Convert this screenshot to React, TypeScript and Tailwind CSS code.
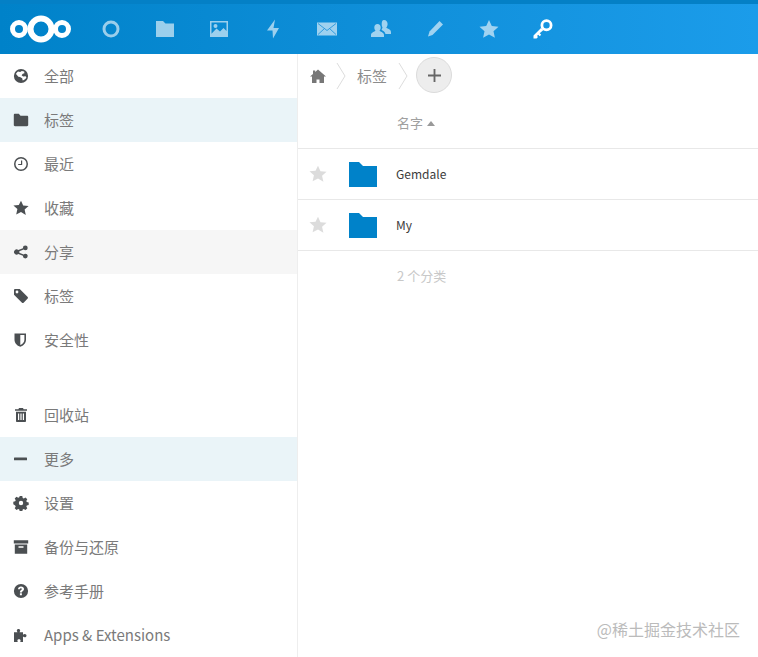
import React from "react";

const FONT = "font-['Noto_Sans_CJK_SC','Liberation_Sans',sans-serif]";

// sidebar glyphs, 16x16 viewBox
const icons: Record<string, React.ReactNode> = {
	globe: (
		<path
			fillRule="evenodd"
			d="M8 .9a7.100 7.100 0 1 0 0 14.200A7.100 7.100 0 0 0 8 .9zM5 3.400l2.200.5 1.600-.9 2.400.6.2 1.600-1.600.6-1.200 1.400 1.500 1.200 2.500-.2.8 1c-.6 1.600-2 2.900-3.700 3.300l-.5-2.200-2.200-1.400-1.600-.2-2.400-2.600C2.900 5.600 3.800 4.300 5 3.400z"
		/>
	),
	folder: <path d="M.8 3C.8 2.300 1.300 1.800 2 1.800h3.800l1.700 2h6.500c.7 0 1.200.5 1.200 1.200v8c0 .7-.5 1.200-1.200 1.200H2c-.7 0-1.200-.5-1.200-1.200z" />,
	clock: (
		<path
			fillRule="evenodd"
			d="M8 1a7 7 0 1 0 0 14A7 7 0 0 0 8 1zm0 1.500a5.500 5.500 0 1 1 0 11 5.500 5.500 0 0 1 0-11zM8 4.500h1.200v4.600H5.200V7.900H8z"
		/>
	),
	star: <path d="M8 .7l2.200 4.900 5.400.5-4 3.500 1.200 5.300L8 11.900l-4.800 2.500 1.200-5.300-4-3.500 5.400-.5z" />,
	share: (
		<path d="M12.300 1.500a2.400 2.400 0 0 1 0 4.800c-.6 0-1.200-.3-1.600-.7L6.300 7.300a2.400 2.400 0 0 1 0 1.400l4.400 1.700c.4-.4 1-.7 1.600-.7a2.400 2.400 0 1 1-2.400 2.400v-.3L5.300 10a2.600 2.600 0 1 1 0-4l4.600-1.800v-.3a2.400 2.400 0 0 1 2.400-2.400z" />
	),
	tag: (
		<path
			fillRule="evenodd"
			d="M1 2.200C1 1.500 1.500 1 2.200 1h4.500l8 8c.4.500.4 1.100 0 1.600l-4.100 4.100c-.5.4-1.100.4-1.600 0l-8-8zM4 2.600a1.400 1.400 0 1 0 0 2.800 1.400 1.400 0 0 0 0-2.800z"
		/>
	),
	shield: (
		<path
			fillRule="evenodd"
			d="M1.500 1.500h11.500v6.300c0 3.400-2.500 5.800-5.700 7-3.300-1.200-5.800-3.600-5.800-7zm5.800 1.600v10c2.200-1 4.100-2.800 4.100-5.300V3.100z"
		/>
	),
	trash: (
		<path
			fillRule="evenodd"
			d="M6 1h4l.6 1.300H14v1.500H2V2.300h3.400zM3 4.800h10V14c0 .6-.5 1-1 1H4c-.5 0-1-.4-1-1zm2 1.700V13h1.200V6.500zm2.400 0V13h1.200V6.500zm2.400 0V13H11V6.500z"
		/>
	),
	minus: <rect x="1" y="6.500" width="13" height="2.800" rx="0.4" />,
	gear: (
		<path
			fillRule="evenodd"
			d="M6.700 1h2.600l.4 1.900 1.100.5 1.700-1 1.800 1.800-1 1.700.5 1.100 1.900.4v2.600l-1.900.4-.5 1.100 1 1.700-1.800 1.800-1.700-1-1.100.5-.4 1.900H6.700l-.4-1.900-1.100-.5-1.700 1-1.800-1.800 1-1.700-.5-1.100L.3 9.300V6.700l1.900-.4.5-1.100-1-1.700 1.800-1.800 1.700 1 1.100-.5zM8 5.800a2.200 2.200 0 1 0 0 4.400 2.200 2.200 0 0 0 0-4.400z"
		/>
	),
	archive: (
		<path
			fillRule="evenodd"
			d="M.8 1.200h14.400v3.300H.8zM1.800 5.500h12.400v9.300H1.800zm3.700 1.800v1.500h5V7.300z"
		/>
	),
	help: (
		<path
			fillRule="evenodd"
			d="M8 .9a7.100 7.100 0 1 0 0 14.200A7.100 7.100 0 0 0 8 .9zM8 3.500c1.800 0 3 1 3 2.500 0 1.100-.6 1.700-1.300 2.200-.6.400-.8.600-.8 1.200H6.900c0-1.200.4-1.800 1.200-2.300.5-.4.800-.6.800-1.100 0-.5-.4-.8-1-.8-.6 0-1 .4-1.100 1H5c.1-1.600 1.300-2.700 3-2.700zM6.900 10.300h2v1.900h-2z"
		/>
	),
	puzzle: (
		<path d="M1 5.200h3.500c-.4-.6-.7-1-.7-1.600C3.800 2.600 4.600 2 5.500 2s1.700.6 1.700 1.600c0 .6-.3 1-.7 1.600H10v2.600c.5-.4 1-.7 1.700-.7 1.200 0 1.800.8 1.800 1.600s-.6 1.600-1.800 1.600c-.7 0-1.200-.3-1.700-.7V15H7.200c.2-.6.4-1 .4-1.400 0-.9-.8-1.400-1.600-1.400s-1.600.5-1.600 1.400c0 .4.200.8.400 1.400H1z" />
	),
};

function NavItem({
	icon,
	label,
	bg = "",
}: {
	icon: string;
	label: string;
	bg?: string;
}) {
	return (
		<div className={`flex items-center h-[44px] pl-[13px] ${bg}`}>
			<svg viewBox="0 0 16 16" className="w-[16px] h-[16px] fill-[#4b4f52]">
				{icons[icon]}
			</svg>
			<span className="ml-[15px] text-[15px] text-[#7a7a7a]">{label}</span>
		</div>
	);
}

function TopIcon({
	children,
	className = "opacity-60",
}: {
	children: React.ReactNode;
	className?: string;
}) {
	return (
		<div className="w-[54px] flex justify-center items-center">
			<svg viewBox="0 0 20 20" className={`w-[20px] h-[20px] fill-white ${className}`}>
				{children}
			</svg>
		</div>
	);
}

function Chevron() {
	return (
		<svg viewBox="0 0 10 28" className="w-[10px] h-[28px] fill-none stroke-[#dddddd]">
			<path d="M1 1l8 13-8 13" />
		</svg>
	);
}

function FileRow({ name }: { name: string }) {
	return (
		<div className="flex items-center h-[51px] border-b border-[#e8e8e8]">
			<div className="w-[40px] flex justify-center">
				<svg viewBox="0 0 16 16" className="w-[18px] h-[18px] fill-[#dcdcdc]">
					{icons.star}
				</svg>
			</div>
			<svg viewBox="0 0 28 25" className="ml-[11px] w-[28px] h-[25px] fill-[#0082c9]">
				<path d="M0 0h10l4 4h14v21H0z" />
			</svg>
			<span className="ml-[19px] text-[12px] text-[#3c3c3c]">{name}</span>
		</div>
	);
}

export default function App() {
	return (
		<div className={`relative w-[758px] h-[657px] overflow-hidden bg-white ${FONT}`}>
			{/* HEADER */}
			<div className="h-[54px] flex border-t-4 border-[#0480c6] bg-gradient-to-r from-[#0082c9] to-[#1b9cea]">
				<div className="w-[84px] flex items-center pl-[10px]">
					<svg viewBox="0 0 62 30" className="w-[62px] h-[30px] fill-none stroke-white">
						<circle cx="31" cy="15" r="10.500" strokeWidth="6" />
						<circle cx="9" cy="15" r="6.500" strokeWidth="5" />
						<circle cx="52" cy="15" r="6.500" strokeWidth="5" />
					</svg>
				</div>
				<div className="flex items-center">
					<TopIcon>
						<path
							fillRule="evenodd"
							d="M10 1.500a8.500 8.500 0 1 0 0 17 8.500 8.500 0 0 0 0-17zm0 3a5.500 5.500 0 1 1 0 11 5.500 5.500 0 0 1 0-11z"
						/>
					</TopIcon>
					<TopIcon>
						<path d="M1 2h7l2.500 2.500H19V18H1z" />
					</TopIcon>
					<TopIcon>
						<path
							fillRule="evenodd"
							d="M1 2h18v16H1zm1.500 1.500v11.200l5-5.200 3.500 3 3.500-3.500 3 3V3.500zM6.500 5a2 2 0 1 1 0 4 2 2 0 0 1 0-4z"
						/>
					</TopIcon>
					<TopIcon>
						<path d="M12 .5 4 11.500h5.500L10 19.500 16 9h-5.500z" />
					</TopIcon>
					<TopIcon>
						<rect x="0" y="3.500" width="20" height="13" />
						<path
							className="fill-none stroke-[#1a8fdc] stroke-[0.8]"
							d="M1 4.500l9 7 9-7M1 15.500l6.500-6M19 15.500l-6.500-6"
						/>
					</TopIcon>
					<TopIcon>
						<path d="M13 1c2.300 0 3.600 1.800 3.600 4 0 1.500-.6 2.800-1.400 3.600.2.900 4.800 1.400 4.800 4.400v2h-5.500c-.4-2.500-2.800-3.500-4-4.300.4-.6.8-1.300 1-2.100-.6-.9-.8-1.800-.8-3 0-2.600.4-4.600 2.300-4.600zM6.500 5c2 0 3.200 1.500 3.200 3.500 0 1.300-.5 2.500-1.200 3.200.2.800 4.500 1.400 4.500 4.300v2H0v-2c0-2.900 4.300-3.500 4.500-4.300-.7-.7-1.200-1.900-1.200-3.200C3.300 6.500 4.500 5 6.500 5z" />
					</TopIcon>
					<TopIcon>
						<path d="M14.500 2 18 5.500 7.500 16 3 17.500l1.500-5z" />
					</TopIcon>
					<TopIcon>
						<path d="M10 1l2.800 6 6.700.7-5 4.500 1.400 6.600L10 15.500l-5.900 3.300 1.400-6.600-5-4.500L7.200 7z" />
					</TopIcon>
					<TopIcon className="opacity-100">
						<path
							fillRule="evenodd"
							d="M13.500.2a6 6 0 1 0 0 12 6 6 0 0 0 0-12zm0 2.800a3.200 3.200 0 1 1 0 6.400 3.200 3.200 0 0 1 0-6.400z"
						/>
						<path d="M8 9 .5 16.500v3h3L5 18l-1-1 1.200-1.200 1.500 1.500 1.500-1.500-1.500-1.500L10.500 11z" />
					</TopIcon>
				</div>
			</div>

			<div className="flex h-[603px]">
				{/* SIDEBAR */}
				<div className="w-[298px] shrink-0 border-r border-[#eeeeee] flex flex-col justify-between">
					<div>
						<NavItem icon="globe" label="全部" />
						<NavItem icon="folder" label="标签" bg="bg-[#eaf4f8]" />
						<NavItem icon="clock" label="最近" />
						<NavItem icon="star" label="收藏" />
						<NavItem icon="share" label="分享" bg="bg-[#f6f6f6]" />
						<NavItem icon="tag" label="标签" />
						<NavItem icon="shield" label="安全性" />
					</div>
					<div>
						<NavItem icon="trash" label="回收站" />
						<NavItem icon="minus" label="更多" bg="bg-[#eaf4f8]" />
						<NavItem icon="gear" label="设置" />
						<NavItem icon="archive" label="备份与还原" />
						<NavItem icon="help" label="参考手册" />
						<NavItem icon="puzzle" label="Apps & Extensions" />
					</div>
				</div>

				{/* FILE LIST */}
				<div className="flex-1">
					<div className="h-[44px] flex items-center pl-[12px]">
						<svg viewBox="0 0 16 16" className="w-[16px] h-[16px] -mt-[1px] fill-[#777777]">
							<path d="M8 1.500 16 8.500h-2V15H9.500v-3.500h-3V15H2V8.500H0L3 5.900V2.500h2.200v1.500z" />
						</svg>
						<div className="ml-[10px]">
							<Chevron />
						</div>
						<span className="ml-[11px] text-[15px] text-[#8c8c8c]">标签</span>
						<div className="ml-[11px]">
							<Chevron />
						</div>
						<div className="ml-[8px] -mt-[2px] w-[36px] h-[36px] rounded-full bg-[#ededed] border border-[#dbdbdb] flex items-center justify-center">
							<svg viewBox="0 0 14 14" className="w-[13px] h-[13px] stroke-[#666666] stroke-2">
								<path d="M7 0v14M0 7h14" />
							</svg>
						</div>
					</div>
					<div className="h-[51px] flex items-center pl-[99px] border-b border-[#e8e8e8]">
						<span className="text-[13px] text-[#a0a0a0]">名字</span>
						<span className="ml-[4px] w-0 h-0 border-x-[4px] border-x-transparent border-b-[5px] border-b-[#999999]" />
					</div>
					<FileRow name="Gemdale" />
					<FileRow name="My" />
					<div className="h-[50px] flex items-center pl-[99px]">
						<span className="text-[13px] text-[#c8c8c8]">2 个分类</span>
					</div>
				</div>
			</div>

			{/* watermark */}
			<div className="absolute right-[18px] bottom-[17px] text-[16px] leading-[22px] text-[#bbbbbb]">
				@稀土掘金技术社区
			</div>
		</div>
	);
}
